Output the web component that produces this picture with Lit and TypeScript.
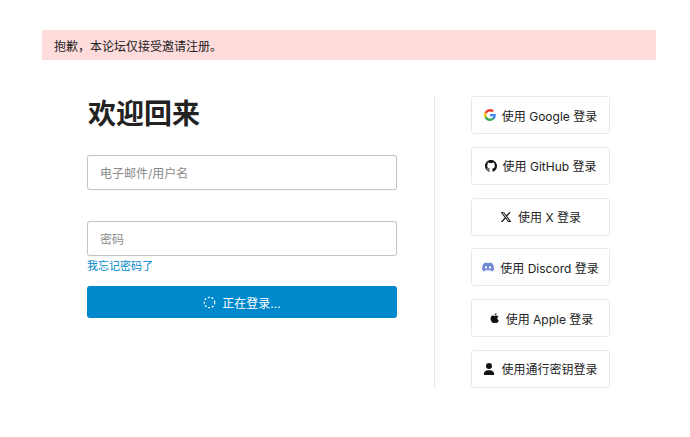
import { LitElement, html, css } from "lit";
import { customElement } from "lit/decorators.js";

const FONT = `Inter, "Noto Sans CJK SC", sans-serif`;

const icons = {
  google: html`<svg class="ic" viewBox="0 0 48 48"><path fill="#EA4335" d="M24 9.5c3.5 0 6.7 1.2 9.2 3.6l6.9-6.9C35.9 2.4 30.5 0 24 0 14.6 0 6.5 5.4 2.6 13.2l8 6.2C12.5 13.7 17.8 9.5 24 9.5z"/><path fill="#4285F4" d="M46.98 24.55c0-1.57-.15-3.09-.38-4.55H24v9.02h12.94c-.58 2.96-2.26 5.48-4.78 7.18l7.73 6c4.51-4.18 7.09-10.36 7.09-17.65z"/><path fill="#FBBC05" d="M10.53 28.59c-.48-1.45-.76-2.99-.76-4.59s.27-3.14.76-4.59l-7.98-6.19C.92 16.46 0 20.12 0 24c0 3.88.92 7.54 2.56 10.78l7.97-6.19z"/><path fill="#34A853" d="M24 48c6.48 0 11.93-2.13 15.89-5.81l-7.73-6c-2.15 1.45-4.92 2.3-8.16 2.3-6.26 0-11.57-4.22-13.47-9.91l-7.98 6.19C6.51 42.62 14.62 48 24 48z"/></svg>`,
  github: html`<svg class="ic" viewBox="0 0 16 16"><path fill="#111" d="M8 0C3.58 0 0 3.58 0 8c0 3.54 2.29 6.53 5.47 7.59.4.07.55-.17.55-.38 0-.19-.01-.82-.01-1.49-2.01.37-2.53-.49-2.69-.94-.09-.23-.48-.94-.82-1.13-.28-.15-.68-.52-.01-.53.63-.01 1.08.58 1.23.82.72 1.21 1.87.87 2.33.66.07-.52.28-.87.51-1.07-1.78-.2-3.64-.89-3.64-3.95 0-.87.31-1.59.82-2.15-.08-.2-.36-1.02.08-2.12 0 0 .67-.21 2.2.82.64-.18 1.32-.27 2-.27s1.36.09 2 .27c1.53-1.04 2.2-.82 2.2-.82.44 1.1.16 1.92.08 2.12.51.56.82 1.27.82 2.15 0 3.07-1.87 3.75-3.65 3.95.29.25.54.73.54 1.48 0 1.07-.01 1.93-.01 2.2 0 .21.15.46.55.38A8.01 8.01 0 0 0 16 8c0-4.42-3.58-8-8-8z"/></svg>`,
  x: html`<svg class="ic" viewBox="0 0 24 24"><path fill="#111" d="M18.24 2.25h3.31l-7.23 8.26 8.5 11.24H16.17l-5.21-6.82-5.97 6.82H1.68l7.73-8.84L1.25 2.25H8.08l4.71 6.23zm-1.16 17.52h1.83L7.08 4.13H5.12z"/></svg>`,
  discord: html`<svg class="ic" viewBox="0 0 24 24"><path fill="#7289da" d="M20.32 4.37A19.8 19.8 0 0 0 15.45 2.86c-.21.38-.46.89-.63 1.3a18.3 18.3 0 0 0-5.49 0 13 13 0 0 0-.64-1.3 19.7 19.7 0 0 0-4.88 1.51C.73 9.04-.11 13.58.31 18.06a19.9 19.9 0 0 0 5.99 3.03c.48-.66.91-1.36 1.28-2.09-.7-.26-1.38-.59-2.01-.97.17-.12.33-.25.49-.38a14.2 14.2 0 0 0 12.12 0c.16.13.32.26.49.38-.64.38-1.31.71-2.02.97.37.73.8 1.43 1.28 2.09a19.8 19.8 0 0 0 6-3.03c.5-5.19-.84-9.7-3.61-13.69zM8.02 15.33c-1.18 0-2.16-1.09-2.16-2.42s.95-2.42 2.16-2.42 2.18 1.09 2.16 2.42c0 1.33-.95 2.42-2.16 2.42zm7.97 0c-1.18 0-2.16-1.09-2.16-2.42s.95-2.42 2.16-2.42 2.18 1.09 2.16 2.42c0 1.33-.94 2.42-2.16 2.42z"/></svg>`,
  apple: html`<svg class="ic" viewBox="0 0 24 24"><path fill="#111" d="M18.7 12.8c0-2.5 2-3.7 2.1-3.8-1.2-1.7-3-1.9-3.6-2-1.5-.2-3 .9-3.8.9-.8 0-2-.9-3.3-.9-1.7 0-3.3 1-4.1 2.5-1.8 3.1-.5 7.6 1.3 10.1.9 1.2 1.9 2.6 3.2 2.5 1.3-.1 1.8-.8 3.3-.8s2 .8 3.3.8c1.4 0 2.2-1.2 3.1-2.5 1-1.4 1.4-2.8 1.4-2.9-.1 0-2.9-1.1-2.9-4.4zM16.2 5.2c.7-.9 1.2-2 1-3.2-1 0-2.2.7-2.9 1.5-.6.7-1.2 1.9-1.1 3 1.2.1 2.3-.5 3-1.3z"/></svg>`,
  user: html`<svg class="ic" viewBox="0 0 448 512"><path fill="#111" d="M224 256a128 128 0 1 0 0-256 128 128 0 1 0 0 256zm-45.7 48C79.8 304 0 383.8 0 482.3 0 498.7 13.3 512 29.7 512h388.6c16.4 0 29.7-13.3 29.7-29.7C448 383.8 368.2 304 269.7 304h-91.4z"/></svg>`,
};

const providers = [
  { icon: icons.google, label: "使用 Google 登录" },
  { icon: icons.github, label: "使用 GitHub 登录" },
  { icon: icons.x, label: "使用 X 登录" },
  { icon: icons.discord, label: "使用 Discord 登录" },
  { icon: icons.apple, label: "使用 Apple 登录" },
  { icon: icons.user, label: "使用通行密钥登录" },
];

@customElement("app-root")
export class AppRoot extends LitElement {
  static styles = css`
    :host {
      display: block;
      width: 690px;
      height: 437px;
      box-sizing: border-box;
      padding: 30px 34px 0 42px;
      background: #fff;
      font-family: ${css([FONT] as unknown as TemplateStringsArray)};
      color: #222;
      font-size: 12px;
      overflow: hidden;
    }
    .alert {
      height: 30px;
      display: flex;
      align-items: center;
      padding-left: 12px;
      background: #ffdcdc;
      color: #222;
      font-size: 12px;
    }
    .main {
      display: flex;
      margin-top: 36px;
      padding-left: 45px;
    }
    .form {
      width: 310px;
      display: flex;
      flex-direction: column;
      padding-right: 37px;
      border-right: 1px solid #e9e9e9;
      height: 292px;
    }
    h1 {
      margin: 0;
      padding-left: 1px;
      font-size: 28px;
      line-height: 36px;
      font-weight: 700;
      color: #222;
    }
    .input {
      height: 35px;
      box-sizing: border-box;
      border: 1px solid #c4c4c4;
      border-radius: 3px;
      padding-left: 12px;
      display: flex;
      align-items: center;
      color: #8a8a8a;
      font-size: 12px;
      background: #fff;
      box-shadow: 0 0 1px #ddd;
    }
    .first {
      margin-top: 23px;
    }
    .second {
      margin-top: 31px;
    }
    .forgot {
      margin-top: 3px;
      height: 15px;
      line-height: 15px;
      font-size: 11px;
      color: #0088cc;
    }
    .submit {
      margin-top: 12px;
      height: 32px;
      border-radius: 3px;
      background: #0088cc;
      color: #fff;
      display: flex;
      align-items: center;
      justify-content: center;
      gap: 6px;
      font-size: 12px;
    }
    .spin {
      width: 13px;
      height: 13px;
    }
    .social {
      margin-left: 36px;
      width: 139px;
      display: flex;
      flex-direction: column;
      justify-content: space-between;
      height: 292px;
    }
    .btn {
      height: 38px;
      box-sizing: border-box;
      border: 1px solid #e9e9e9;
      border-radius: 3px;
      display: flex;
      align-items: center;
      justify-content: center;
      gap: 6px;
      font-size: 12px;
      color: #222;
      white-space: nowrap;
    }
    .ic {
      width: 12px;
      height: 12px;
      flex: none;
    }
  `;

  render() {
    return html`
      <div class="alert">抱歉，本论坛仅接受邀请注册。</div>
      <div class="main">
        <div class="form">
          <h1>欢迎回来</h1>
          <div class="input first">电子邮件/用户名</div>
          <div class="input second">密码</div>
          <div class="forgot">我忘记密码了</div>
          <div class="submit">
            <svg class="spin" viewBox="0 0 14 14" fill="none" stroke="#fff" stroke-width="1.4" stroke-dasharray="2 2"><circle cx="7" cy="7" r="5.6"/></svg>
            <span>正在登录...</span>
          </div>
        </div>
        <div class="social">
          ${providers.map((p) => html`<div class="btn">${p.icon}<span>${p.label}</span></div>`)}
        </div>
      </div>
    `;
  }
}
